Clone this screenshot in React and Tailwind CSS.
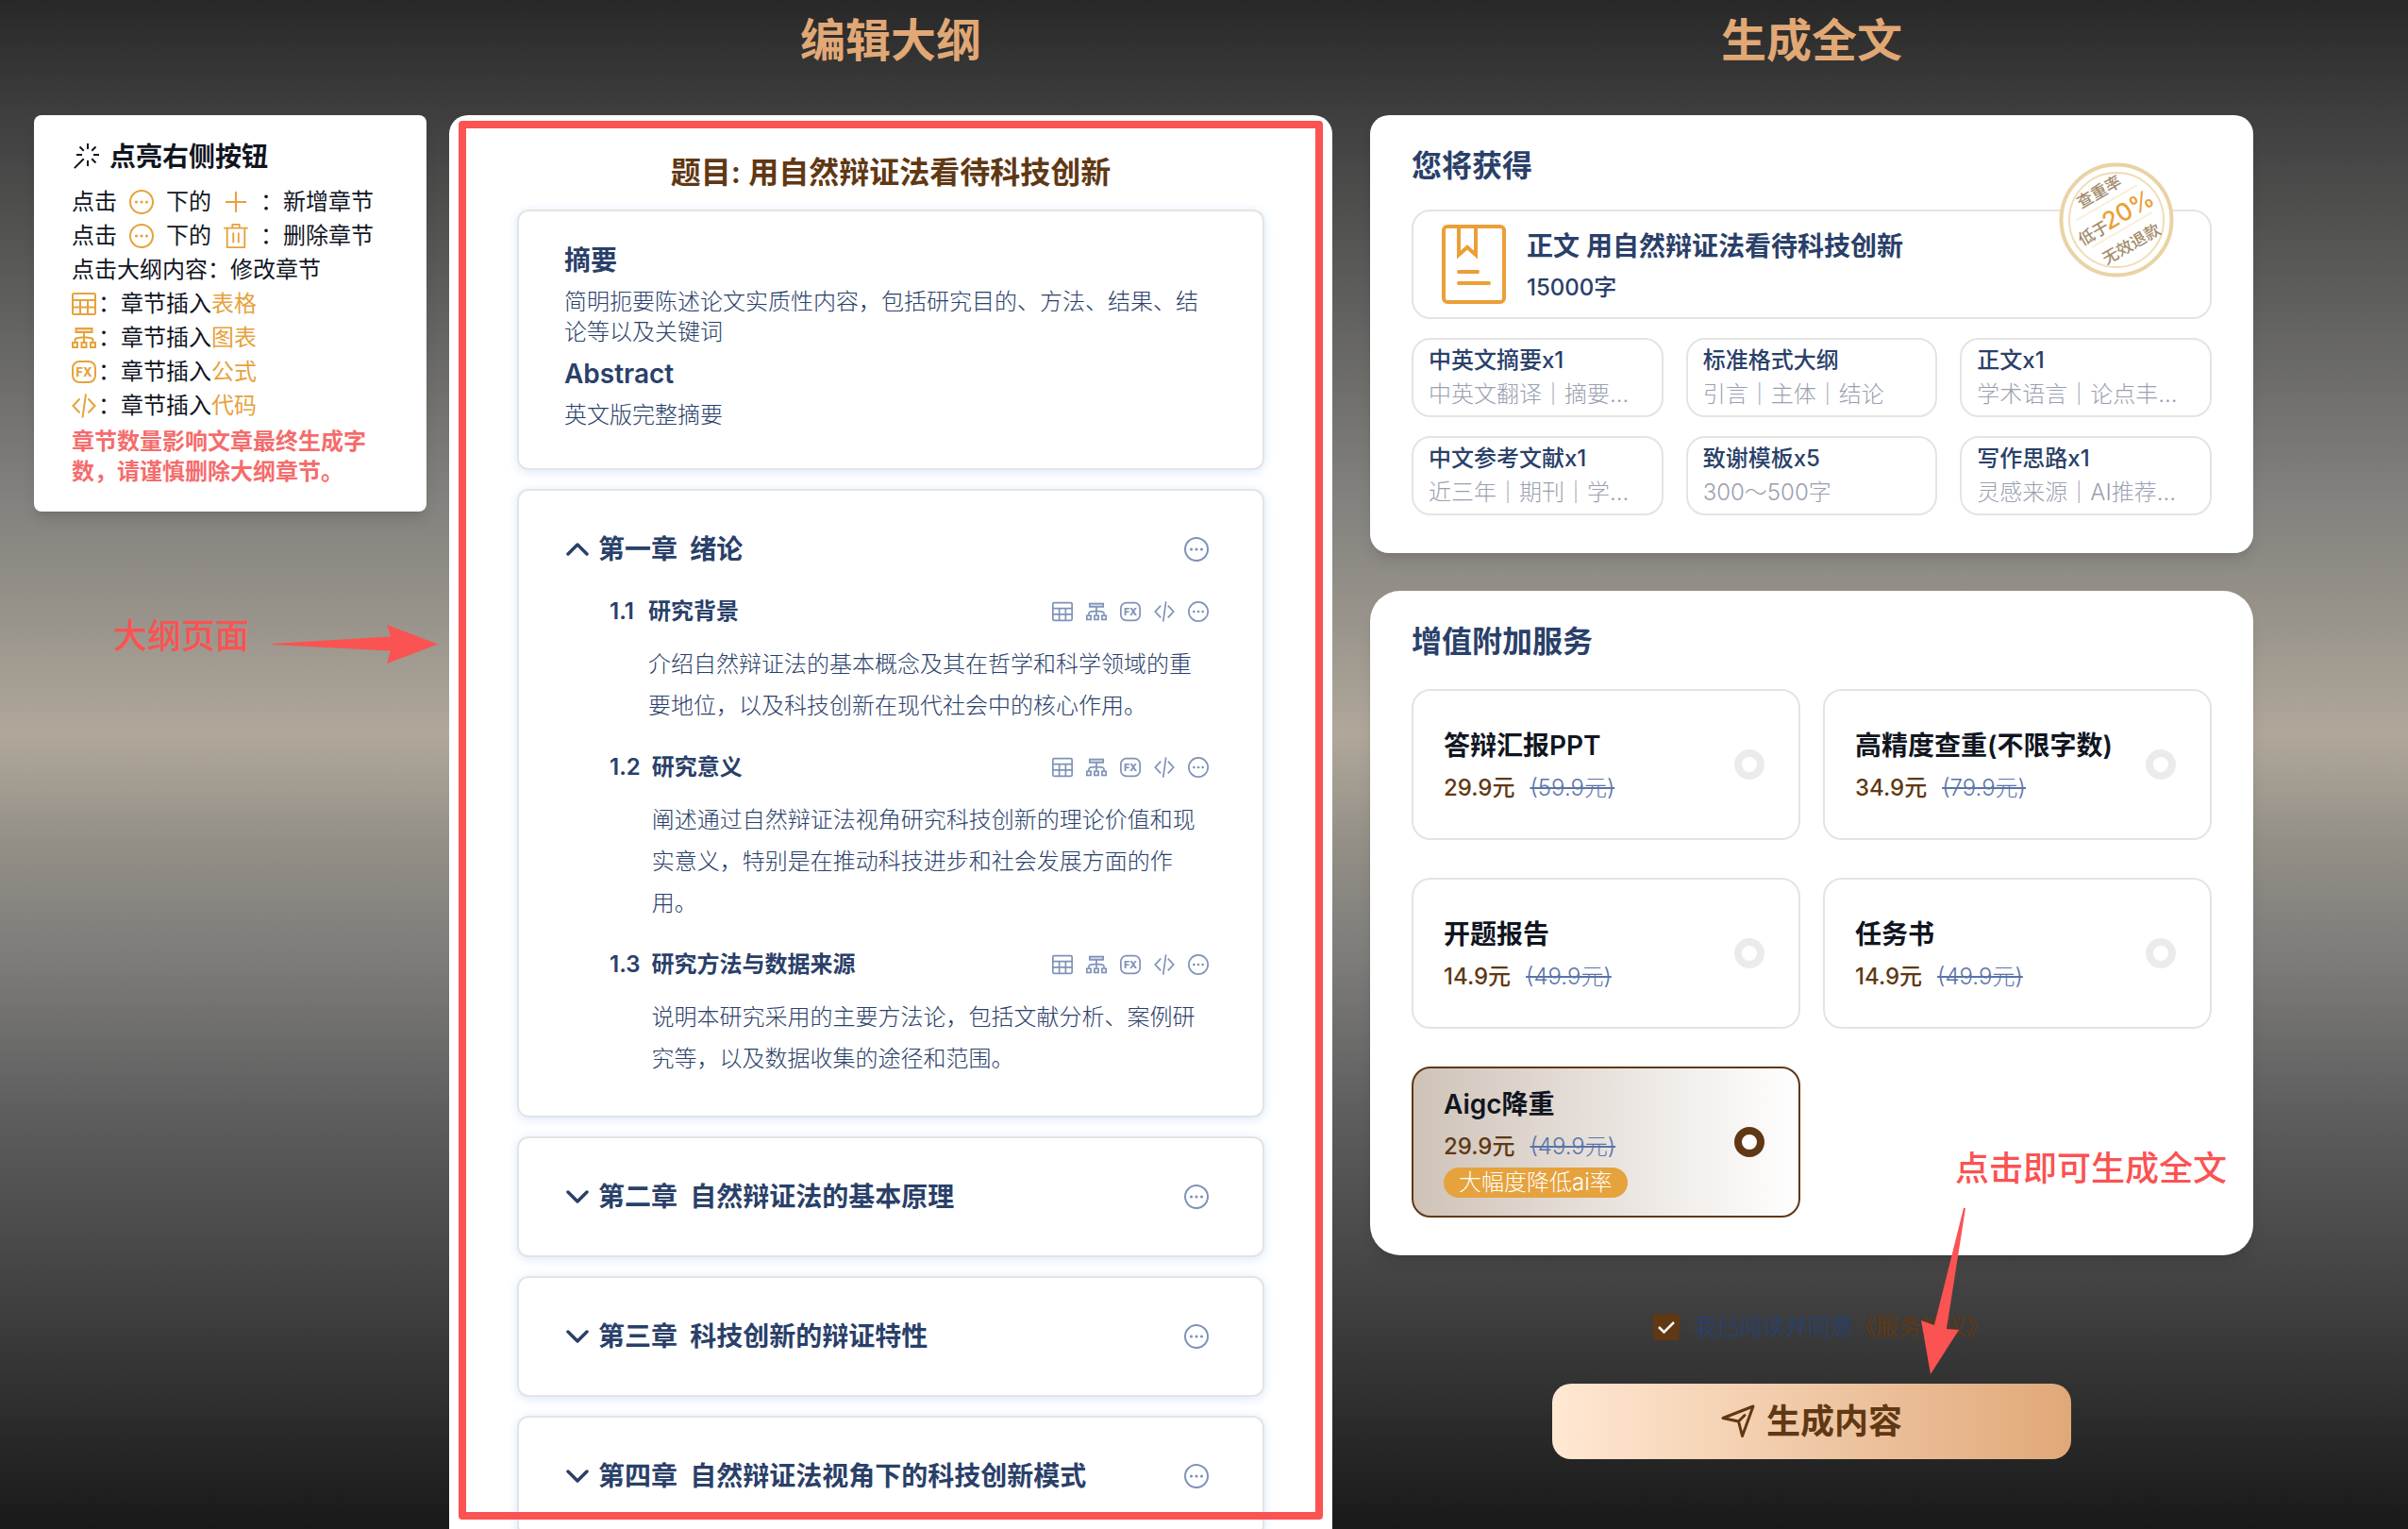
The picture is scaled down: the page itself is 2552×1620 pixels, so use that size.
import React, { useState } from "react";

const chapters = [
  {
    name: "第一章",
    title: "绪论",
    sections: [
      {
        no: "1.1",
        title: "研究背景",
        desc: "介绍自然辩证法的基本概念及其在哲学和科学领域的重要地位，以及科技创新在现代社会中的核心作用。",
      },
      {
        no: "1.2",
        title: "研究意义",
        desc: "阐述通过自然辩证法视角研究科技创新的理论价值和现实意义，特别是在推动科技进步和社会发展方面的作用。",
      },
      {
        no: "1.3",
        title: "研究方法与数据来源",
        desc: "说明本研究采用的主要方法论，包括文献分析、案例研究等，以及数据收集的途径和范围。",
      },
    ],
  },
  { name: "第二章", title: "自然辩证法的基本原理", sections: [] },
  { name: "第三章", title: "科技创新的辩证特性", sections: [] },
  { name: "第四章", title: "自然辩证法视角下的科技创新模式", sections: [] },
];

const gifts = [
  { title: "中英文摘要x1", desc: "中英文翻译｜摘要..." },
  { title: "标准格式大纲", desc: "引言｜主体｜结论" },
  { title: "正文x1", desc: "学术语言｜论点丰..." },
  { title: "中文参考文献x1", desc: "近三年｜期刊｜学..." },
  { title: "致谢模板x5", desc: "300～500字" },
  { title: "写作思路x1", desc: "灵感来源｜AI推荐..." },
];

const services = [
  { id: "ppt", title: "答辩汇报PPT", price: "29.9元", old: "(59.9元)" },
  { id: "check", title: "高精度查重(不限字数)", price: "34.9元", old: "(79.9元)" },
  { id: "report", title: "开题报告", price: "14.9元", old: "(49.9元)" },
  { id: "task", title: "任务书", price: "14.9元", old: "(49.9元)" },
  { id: "aigc", title: "Aigc降重", price: "29.9元", old: "(49.9元)", tag: "大幅度降低ai率" },
];

function MoreIcon({ className }) {
  return (
    <svg viewBox="0 0 26 26" className={className} fill="none" stroke="currentColor" strokeWidth="2">
      <circle cx="13" cy="13" r="12" />
      <g fill="currentColor" stroke="none">
        <circle cx="7.5" cy="13" r="1.6" />
        <circle cx="13" cy="13" r="1.6" />
        <circle cx="18.5" cy="13" r="1.6" />
      </g>
    </svg>
  );
}

function TableIcon({ className }) {
  return (
    <svg viewBox="0 0 26 26" className={className} fill="none" stroke="currentColor" strokeWidth="2">
      <rect x="1" y="2" width="24" height="22" rx="1.5" />
      <path d="M1 9h24M1 16.5h24M9 9v15M17 9v15" />
    </svg>
  );
}

function TreeIcon({ className }) {
  return (
    <svg viewBox="0 0 26 26" className={className} fill="none" stroke="currentColor" strokeWidth="2">
      <rect x="4.5" y="3" width="17" height="4" fill="currentColor" fillOpacity="0.35" />
      <path d="M13 7v10M3.5 17v-1.500q0-2 2-2.300L10 12.500h6l4.500.7q2 .3 2 2.300V17" />
      <rect x="1" y="18" width="5" height="5" />
      <rect x="10.500" y="18" width="5" height="5" />
      <rect x="20" y="18" width="5" height="5" />
    </svg>
  );
}

function FormulaIcon({ className }) {
  return (
    <svg viewBox="0 0 26 26" className={className} fill="none" stroke="currentColor" strokeWidth="2">
      <rect x="1" y="2" width="24" height="22" rx="7" />
      <text
        x="13"
        y="17.500"
        textAnchor="middle"
        fontSize="12.500"
        fontWeight="800"
        fontFamily="Inter, sans-serif"
        fill="currentColor"
        stroke="none"
      >
        FX
      </text>
    </svg>
  );
}

function CodeIcon({ className }) {
  return (
    <svg viewBox="0 0 26 26" className={className} fill="none" stroke="currentColor" strokeWidth="2">
      <path d="M8.500 5.500L1.500 13l7 7.500M17.500 5.500l7 7.500-7 7.500M15 0.500L11.500 25.500" />
    </svg>
  );
}

function PlusIcon({ className }) {
  return (
    <svg viewBox="0 0 26 26" className={className} fill="none" stroke="currentColor" strokeWidth="2">
      <path d="M2 13h22M13 2v22" />
    </svg>
  );
}

function TrashIcon({ className }) {
  return (
    <svg viewBox="64 64 896 896" className={className} fill="currentColor">
      <path d="M160 256H96a32 32 0 0 1 0-64h256V95.936a32 32 0 0 1 32-32h256a32 32 0 0 1 32 32V192h256a32 32 0 1 1 0 64h-64v672a32 32 0 0 1-32 32H192a32 32 0 0 1-32-32V256zm448-64v-64H416v64h192zM224 896h576V256H224v640zm192-128a32 32 0 0 1-32-32V416a32 32 0 0 1 64 0v320a32 32 0 0 1-32 32zm192 0a32 32 0 0 1-32-32V416a32 32 0 0 1 64 0v320a32 32 0 0 1-32 32z" />
    </svg>
  );
}

function WandIcon({ className }) {
  return (
    <svg viewBox="0 0 1024 1024" className={className} fill="currentColor">
      <path d="M512 64h64v192h-64V64zm0 576h64v192h-64V640zM160 480v-64h192v64H160zm576 0v-64h192v64H736zM249.856 199.040l45.248-45.184L430.848 289.600 385.600 334.848 249.856 199.104zM657.152 606.400l45.248-45.248 135.744 135.744-45.248 45.248L657.152 606.400zM114.048 923.200 68.800 877.952l316.800-316.800 45.248 45.248-316.800 316.800zM702.400 334.848 657.152 289.600l135.744-135.744 45.248 45.248L702.400 334.848z" />
    </svg>
  );
}

function SendIcon({ className }) {
  return (
    <svg viewBox="0 0 36 36" className={className} fill="none" stroke="currentColor" strokeWidth="3" strokeLinejoin="round" strokeLinecap="round">
      <path d="M2 14.500L34 2 22.500 33.500 18.500 18z" />
      <path d="M18.500 18L25 11.500" />
    </svg>
  );
}

function BookIcon({ className }) {
  return (
    <svg viewBox="0 0 68 84" className={className} fill="none" stroke="currentColor" strokeWidth="4">
      <rect x="2" y="2" width="64" height="80" rx="4" />
      <path d="M18 2v30l9-8 9 8V2" />
      <path d="M18 50h20M18 62h32" strokeLinecap="round" />
    </svg>
  );
}

function Seal({ className }) {
  return (
    <svg viewBox="0 0 122 122" className={className} fontFamily="Inter, 'Noto Sans CJK SC', sans-serif">
      <circle cx="61" cy="61" r="58.500" fill="#fff" stroke="#e9d3a6" strokeWidth="4" />
      <circle cx="61" cy="61" r="50" fill="none" stroke="#f0dcb4" strokeWidth="2" />
      <g transform="rotate(-30 61 61)" textAnchor="middle" fill="#a28c6c" fontSize="17" fontWeight="500">
        <path d="M24 40h74M24 73h74" stroke="#fbeed9" strokeWidth="2" />
        <text x="60" y="32">查重率</text>
        <text x="33" y="67">低于</text>
        <text x="77" y="67" fill="#eb9f38" fontSize="26">20%</text>
        <text x="62" y="97">无效退款</text>
      </g>
    </svg>
  );
}

function Chevron({ open }) {
  return (
    <svg viewBox="0 0 24 24" className={`ml-0.5 size-6 ${open ? "rotate-180" : ""}`} fill="none" stroke="currentColor" strokeWidth="3.500" strokeLinecap="round" strokeLinejoin="round">
      <path d="M2 7l10 10L22 7" />
    </svg>
  );
}

function Tips() {
  const inserts = [
    { Icon: TableIcon, name: "表格" },
    { Icon: TreeIcon, name: "图表" },
    { Icon: FormulaIcon, name: "公式" },
    { Icon: CodeIcon, name: "代码" },
  ];
  return (
    <div className="rounded-lg bg-white px-10 py-[26px] text-2xl leading-9 text-[#11151f] shadow-lg">
      <h3 className="mb-3 flex items-center gap-2 text-[28px] leading-9 font-bold">
        <WandIcon className="size-8" />
        点亮右侧按钮
      </h3>
      <div className="flex items-center gap-[13px]">
        点击
        <MoreIcon className="size-[26px] text-[#e6a23c]" />
        下的
        <PlusIcon className="size-[26px] text-[#e6a23c]" />
        <span>：新增章节</span>
      </div>
      <div className="flex items-center gap-[13px]">
        点击
        <MoreIcon className="size-[26px] text-[#e6a23c]" />
        下的
        <TrashIcon className="size-[26px] text-[#e6a23c]" />
        <span>：删除章节</span>
      </div>
      <p>点击大纲内容：修改章节</p>
      {inserts.map(({ Icon, name }) => (
        <div key={name} className="flex items-center gap-0.5">
          <Icon className="size-[26px] text-[#e6a23c]" />
          <p>
            ：章节插入<span className="text-[#e6a23c]">{name}</span>
          </p>
        </div>
      ))}
      <p className="mt-1 leading-8 font-bold text-[#f56c6c]">章节数量影响文章最终生成字数，请谨慎删除大纲章节。</p>
    </div>
  );
}

function Section({ no, title, desc }) {
  return (
    <li className="flex gap-3 text-2xl leading-11">
      <span className="min-w-[29px] font-semibold">{no}</span>
      <div className="flex-1">
        <div className="flex items-center justify-between">
          <h4 className="font-semibold">{title}</h4>
          <div className="flex items-center gap-3.5 text-[#7f93b8]">
            <button aria-label="插入表格"><TableIcon className="size-[22px]" /></button>
            <button aria-label="插入图表"><TreeIcon className="size-[22px]" /></button>
            <button aria-label="插入公式"><FormulaIcon className="size-[22px]" /></button>
            <button aria-label="插入代码"><CodeIcon className="size-[22px]" /></button>
            <button aria-label="更多"><MoreIcon className="size-[22px]" /></button>
          </div>
        </div>
        <p className="mt-3 font-light">{desc}</p>
      </div>
    </li>
  );
}

function Chapter({ name, title, sections, defaultOpen }) {
  const [open, setOpen] = useState(defaultOpen);
  return (
    <div className="rounded-xl border-2 border-[#e4e4e4] bg-white py-[38px] pr-[57px] pl-12 shadow-[0_2px_12px_#d9e9fd]">
      <div className="flex h-12 items-center justify-between">
        <button onClick={() => setOpen(!open)} className="flex items-center gap-2.5 text-[28px] font-bold">
          <Chevron open={open} />
          <span>{name}&nbsp; {title}</span>
        </button>
        <button aria-label="更多" className="text-[#7f93b8]">
          <MoreIcon className="size-[26px]" />
        </button>
      </div>
      {open && sections.length > 0 && (
        <ul className="mt-5 flex flex-col gap-[21px] pl-12">
          {sections.map((s) => (
            <Section key={s.no} {...s} />
          ))}
        </ul>
      )}
    </div>
  );
}

function Service({ item, checked, onChange }) {
  return (
    <label
      className={`flex h-40 items-center justify-between rounded-[20px] border-2 pr-9 pl-8 ${
        checked ? "border-[#603813] bg-linear-to-r from-[#cfc3b8] via-[#e8e2dd] to-white" : "border-[#e4e4e4] bg-white"
      }`}
    >
      <div className="pt-1">
        <h4 className="text-[28px] leading-[46px] font-semibold text-[#11151f]">{item.title}</h4>
        <p className="flex gap-4 text-2xl leading-11">
          <span className="font-medium text-[#603813]">{item.price}</span>
          <del className="font-light text-[#5a74a8]">{item.old}</del>
        </p>
        {item.tag && (
          <span className="mb-2 block w-fit rounded-full bg-[#e6a23c] px-4 text-2xl leading-8 font-light text-white">{item.tag}</span>
        )}
      </div>
      <input
        type="checkbox"
        checked={checked}
        onChange={onChange}
        className="size-8 shrink-0 appearance-none rounded-full border-8 border-[#ebebeb] bg-white checked:border-[#603813]"
      />
    </label>
  );
}

function App() {
  const [selected, setSelected] = useState(["aigc"]);
  const [agreed, setAgreed] = useState(true);

  const toggle = (id) => {
    setSelected(selected.includes(id) ? selected.filter((s) => s !== id) : [...selected, id]);
  };

  return (
    <div className="flex h-screen overflow-hidden bg-[linear-gradient(#282828_0%,#404040_8%,#83827e_33%,#9a958c_41%,#b0a79a_48%,#949087_55%,#7c7b79_63%,#606060_72%,#3b3b3b_87%,#191919_100%)] pr-[164px] pl-9 font-[Inter,'Noto_Sans_CJK_SC',sans-serif] text-[#2a4069]">
      <aside className="w-[416px] shrink-0 pt-[122px]">
        <Tips />
        <div className="mt-[108px] ml-[84px] flex items-start gap-6 text-[#fb5252]">
          <span className="shrink-0 text-4xl leading-12 font-medium">大纲页面</span>
          <svg viewBox="0 0 176 41" className="mt-3 h-[41px] w-44 shrink-0" fill="currentColor">
            <path d="M0 20L126 12.500 122 0 176 20.500 122 41 126 27.500 0 21z" />
          </svg>
        </div>
      </aside>

      <main className="relative ml-6 min-w-0 flex-1">
        <h2 className="mb-9 text-center text-5xl leading-[86px] font-semibold text-[#e1a876]">编辑大纲</h2>
        <div className="rounded-[20px] bg-white px-[72px] pt-9 pb-10">
          <h1 className="mb-3.5 text-center text-[32px] leading-[50px] font-semibold text-[#603813]">题目: 用自然辩证法看待科技创新</h1>
          <div className="flex flex-col gap-5">
            <div className="flex flex-col gap-3 rounded-xl border-2 border-[#e4e4e4] bg-white px-12 pt-9 pb-10 text-2xl leading-8 shadow-[0_2px_12px_#d9e9fd]">
              <h3 className="text-[28px] leading-8 font-bold">摘要</h3>
              <p className="font-light">简明扼要陈述论文实质性内容，包括研究目的、方法、结果、结论等以及关键词</p>
              <h3 className="text-[28px] leading-8 font-semibold">Abstract</h3>
              <p className="font-light">英文版完整摘要</p>
            </div>
            {chapters.map((c, i) => (
              <Chapter key={c.name} {...c} defaultOpen={i === 0} />
            ))}
          </div>
        </div>
        {/* highlight frame over the outline panel */}
        <div className="pointer-events-none absolute inset-x-2.5 top-32 bottom-2.5 rounded-sm border-8 border-[#fb5252]" />
      </main>

      <section className="relative ml-10 min-w-0 flex-1">
        <h2 className="mb-9 text-center text-5xl leading-[86px] font-semibold text-[#e1a876]">生成全文</h2>

        <div className="rounded-[20px] bg-white px-11 pt-[30px] pb-10 shadow-lg">
          <h3 className="mb-[22px] text-[32px] leading-12 font-semibold">您将获得</h3>
          <div className="relative flex h-[116px] items-center gap-[22px] rounded-[20px] border-2 border-[#e4e4e4] px-[30px]">
            <BookIcon className="h-[84px] w-[68px] text-[#eb9f38]" />
            <div className="pt-1.5">
              <p className="text-[28px] leading-11 font-semibold">正文 用自然辩证法看待科技创新</p>
              <p className="text-2xl leading-11 font-medium">15000字</p>
            </div>
            <Seal className="absolute -top-[52px] right-[38px] size-[122px]" />
          </div>
          <div className="mt-5 grid grid-cols-3 gap-x-6 gap-y-5">
            {gifts.map((g) => (
              <div key={g.title} className="rounded-[20px] border-2 border-[#e4e4e4] px-4 py-1 text-2xl leading-9">
                <p className="font-medium">{g.title}</p>
                <p className="truncate font-light text-[#9a9fb0]">{g.desc}</p>
              </div>
            ))}
          </div>
        </div>

        <div className="mt-10 rounded-[32px] bg-white px-11 pt-[30px] pb-10 shadow-lg">
          <h3 className="mb-[26px] text-[32px] leading-12 font-semibold">增值附加服务</h3>
          <div className="grid grid-cols-2 gap-x-6 gap-y-10">
            {services.map((s) => (
              <Service key={s.id} item={s} checked={selected.includes(s.id)} onChange={() => toggle(s.id)} />
            ))}
          </div>
        </div>

        <div className="mt-[58px] flex items-center justify-center pl-5 text-2xl leading-9">
          <label className="flex items-center gap-4">
            <span className="relative flex size-7">
              <input
                type="checkbox"
                checked={agreed}
                onChange={(e) => setAgreed(e.target.checked)}
                className="size-7 appearance-none rounded-sm border-2 border-[#603813] checked:bg-[#603813]"
              />
              {agreed && (
                <svg viewBox="0 0 28 28" className="pointer-events-none absolute inset-0 size-7" fill="none" stroke="#fff" strokeWidth="2.500">
                  <path d="M6 14l5.500 5.500L22 9" />
                </svg>
              )}
            </span>
            我已阅读并同意
          </label>
          <a href="#terms" className="text-[#603813]">《服务协议》</a>
        </div>

        <button className="mx-auto mt-[42px] flex h-20 w-[550px] items-center justify-center gap-3 rounded-[20px] bg-linear-to-r from-[#ffe8d3] to-[#e0a878] text-4xl font-semibold text-[#603813]">
          <SendIcon className="size-9" />
          生成内容
        </button>

        <div className="pointer-events-none absolute top-[1214px] right-7 flex flex-col items-start text-[#fb5252]">
          <p className="text-4xl leading-12 font-medium">点击即可生成全文</p>
          <svg viewBox="0 0 48 176" className="mt-[18px] -ml-9 h-44 w-12" fill="currentColor">
            <path d="M45 0L47 0 27 128 40 129 10 176 0 119 14 124z" />
          </svg>
        </div>
      </section>
    </div>
  );
}

export default App;
